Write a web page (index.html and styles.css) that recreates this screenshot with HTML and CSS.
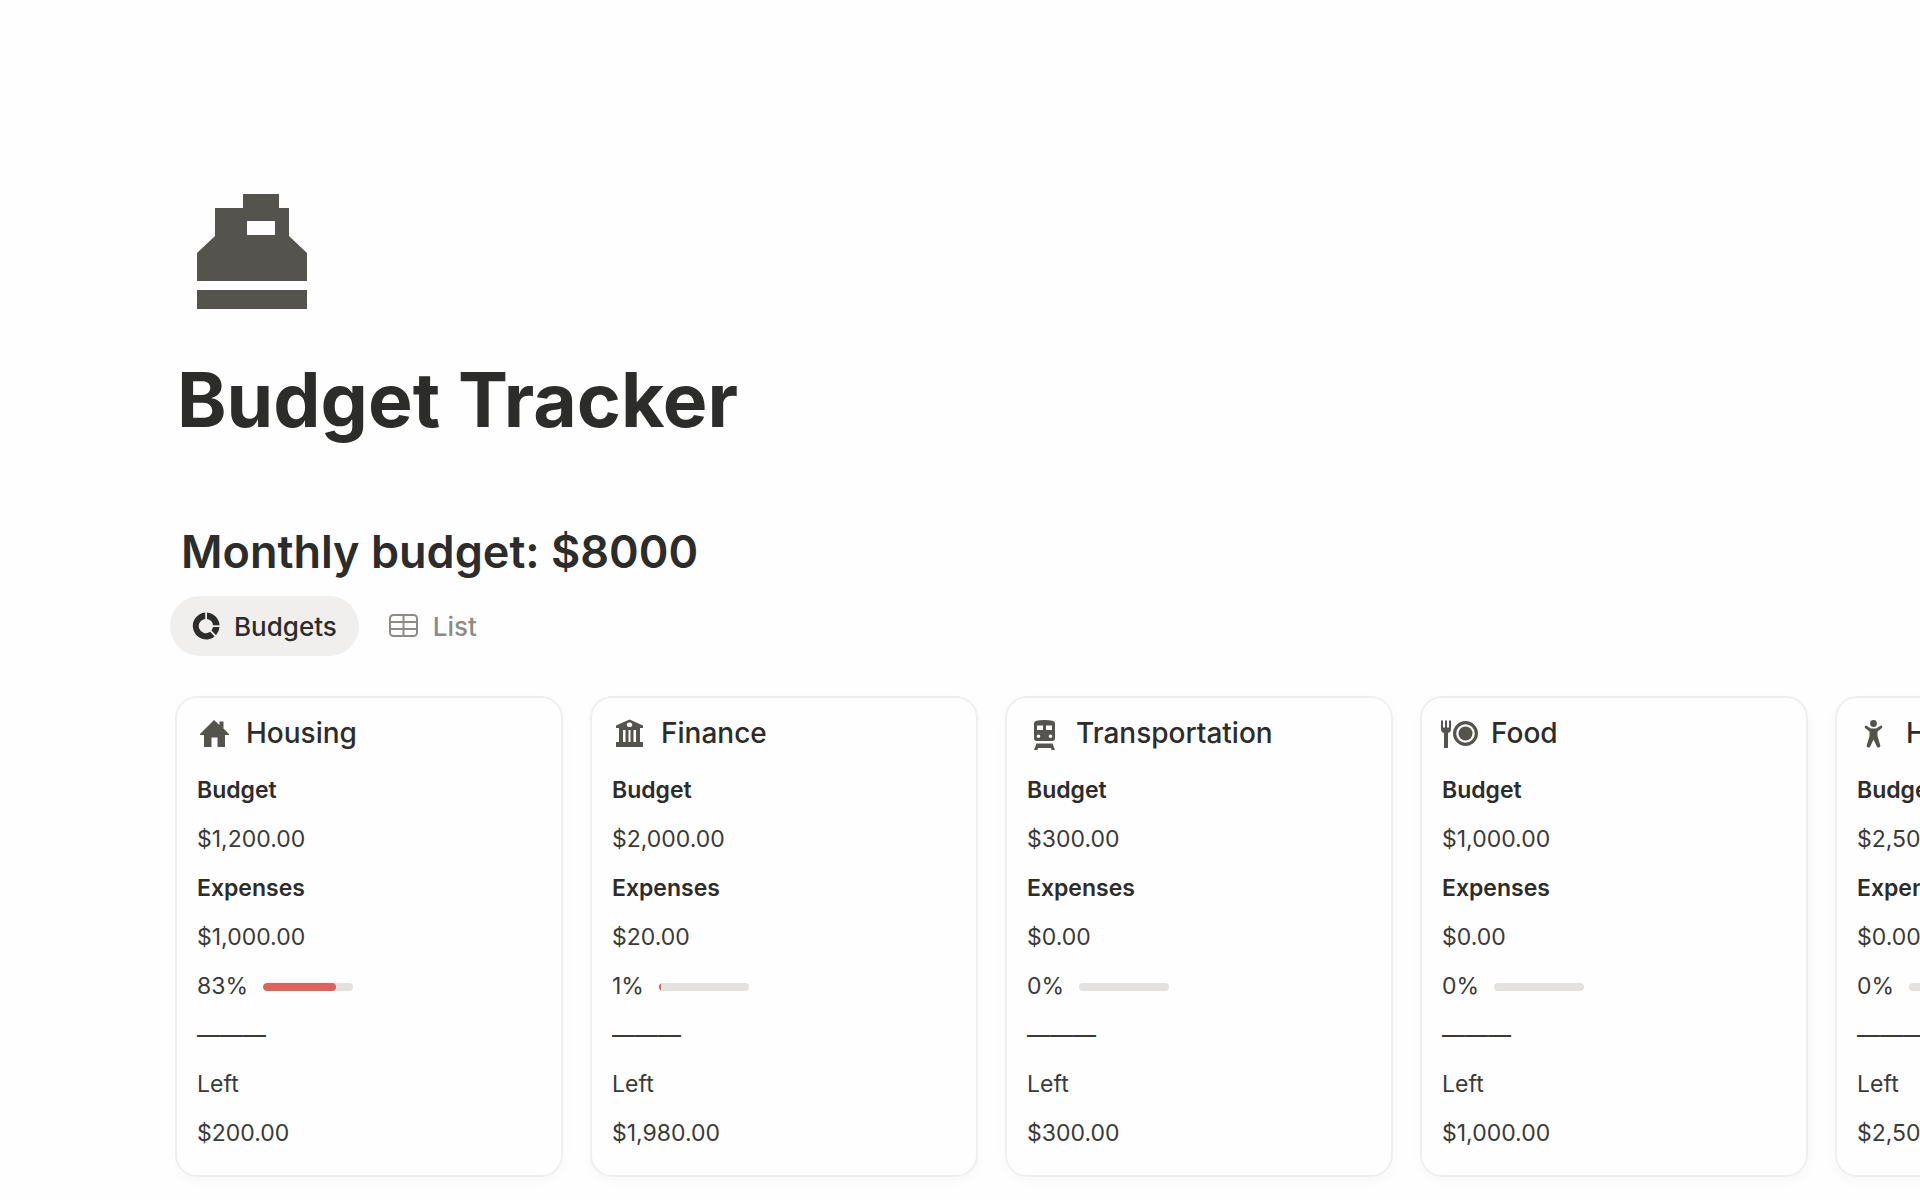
FILE: index.html
```
<!DOCTYPE html>
<html lang="en">
<head>
    <meta charset="UTF-8">
    <meta name="viewport" content="width=device-width, initial-scale=1.0">
    <title>Budget Tracker</title>
    <link rel="stylesheet" href="styles.css">
</head>
<body>

    <main class="page">
        <!-- Cash register -->
        <svg class="page-icon" viewBox="0 0 110 115" aria-hidden="true">
            <path fill-rule="evenodd" d="M46 0H82V14H92V42L110 59V87H0V59L18 42V14H46ZM50 27V41H78V27Z"/>
            <path d="M0 96H110V115H0Z"/>
        </svg>

        <h1 class="page-title">Budget Tracker</h1>
        <h2 class="section-title">Monthly budget: $8000</h2>

        <nav class="tabs">
            <button class="tab active" type="button">
                <svg class="tab-icon" viewBox="0 0 28 28" aria-hidden="true">
                    <path d="M13.2 0.5V7A7.1 7.1 0 1 0 18.2 19.700L22.600 24.600A13.5 13.5 0 1 1 13.2 0.5Z"/>
                    <path d="M15 0.5A13.5 13.5 0 0 1 27.5 13.2H21A7.1 7.1 0 0 0 15 7Z"/>
                    <path d="M21 15H27.5A13.5 13.5 0 0 1 24 23.300L19.500 18.400A7.1 7.1 0 0 0 21 15Z"/>
                </svg>
                Budgets
            </button>
            <button class="tab" type="button">
                <svg class="tab-icon table-icon" viewBox="0 0 30 28" aria-hidden="true">
                    <rect class="line" x="1" y="3" width="27" height="21" rx="3.5"/>
                    <path class="line" d="M1 10H28M1 17H28M14.5 3V24"/>
                </svg>
                List
            </button>
        </nav>

        <section class="board">
            <article class="card">
                <h3 class="card-title">
                    <svg class="card-icon" viewBox="0 0 36 36" aria-hidden="true">
                        <path d="M3 19L17 5L22.5 10V6.500H26.500V13.500L32 19V20H28V32H20.500V22.500H14.500V32H7V20H3Z"/>
                    </svg>
                    Housing
                </h3>
                <p class="label">Budget</p>
                <p>$1,200.00</p>
                <p class="label">Expenses</p>
                <p>$1,000.00</p>
                <p class="usage">83% <span class="bar"><span class="fill" style="width: 81%"></span></span></p>
                <p>———</p>
                <p>Left</p>
                <p>$200.00</p>
            </article>

            <article class="card">
                <h3 class="card-title">
                    <svg class="card-icon" viewBox="0 0 36 36" aria-hidden="true">
                        <path fill-rule="evenodd" d="M4 10.500L17.500 4.500L31 10.500V13H28V27H31V32H4V27H7V13H4ZM17.500 7.500A2.300 2.300 0 1 0 17.500 12A2.300 2.300 0 1 0 17.500 7.500ZM11 15V27H13.500V15ZM16.500 15V27H18.500V15ZM21.500 15V27H24V15Z"/>
                    </svg>
                    Finance
                </h3>
                <p class="label">Budget</p>
                <p>$2,000.00</p>
                <p class="label">Expenses</p>
                <p>$20.00</p>
                <p class="usage">1% <span class="bar"><span class="fill" style="width: 2%"></span></span></p>
                <p>———</p>
                <p>Left</p>
                <p>$1,980.00</p>
            </article>

            <article class="card">
                <h3 class="card-title">
                    <svg class="card-icon" viewBox="0 0 36 36" aria-hidden="true">
                        <path fill-rule="evenodd" d="M7 8Q7 5 17.500 5Q28 5 28 8V23Q28 26 25 26H10Q7 26 7 23ZM10 10.500V15H16V10.500ZM19 10.500V15H25V10.500ZM11.500 19.500A1.800 1.800 0 1 0 11.500 23.100A1.800 1.800 0 1 0 11.500 19.500ZM23.500 19.500A1.800 1.800 0 1 0 23.500 23.100A1.800 1.800 0 1 0 23.500 19.500Z"/>
                        <path d="M9.500 28.500H25.500L28 35H24.500L24 33H11L10.500 35H7Z"/>
                    </svg>
                    Transportation
                </h3>
                <p class="label">Budget</p>
                <p>$300.00</p>
                <p class="label">Expenses</p>
                <p>$0.00</p>
                <p class="usage">0% <span class="bar"></span></p>
                <p>———</p>
                <p>Left</p>
                <p>$300.00</p>
            </article>

            <article class="card">
                <h3 class="card-title">
                    <svg class="card-icon" viewBox="0 0 36 36" aria-hidden="true">
                        <path d="M-1 5.500H1V12.500H3V5.500H5V12.500H7V5.500H9V14Q9 17 6 18V33H2V18Q-1 17 -1 14Z"/>
                        <path fill-rule="evenodd" d="M23.500 6A12.500 12.500 0 1 0 23.500 31A12.500 12.500 0 1 0 23.500 6ZM23.500 9.200A9.300 9.300 0 1 1 23.500 27.800A9.300 9.300 0 1 1 23.500 9.200Z"/>
                        <circle cx="23.500" cy="18.500" r="7"/>
                    </svg>
                    Food
                </h3>
                <p class="label">Budget</p>
                <p>$1,000.00</p>
                <p class="label">Expenses</p>
                <p>$0.00</p>
                <p class="usage">0% <span class="bar"></span></p>
                <p>———</p>
                <p>Left</p>
                <p>$1,000.00</p>
            </article>

            <article class="card">
                <h3 class="card-title">
                    <svg class="card-icon" viewBox="0 0 36 36" aria-hidden="true">
                        <circle cx="16.500" cy="8.500" r="3.400"/>
                        <path d="M9 10.500L14 13.500H19L24 10.500Q26 11 25 13L20.500 16.500V21L23.500 31Q22 33.500 20 32L16.500 24.500L13 32Q11 33.500 9.500 31L12.500 21V16.500L8 13Q7 11 9 10.500Z"/>
                    </svg>
                    Health
                </h3>
                <p class="label">Budget</p>
                <p>$2,500.00</p>
                <p class="label">Expenses</p>
                <p>$0.00</p>
                <p class="usage">0% <span class="bar"></span></p>
                <p>———</p>
                <p>Left</p>
                <p>$2,500.00</p>
            </article>
        </section>
    </main>

</body>
</html>
```

FILE: styles.css
```
* {
    box-sizing: border-box;
}

body {
    margin: 0;
    background-color: #fefefe;
    color: #2c2c2b;
    font-family: Inter, sans-serif;
}

h1, h2, h3, p {
    margin: 0;
}

svg {
    fill: currentColor;
    flex-shrink: 0;
}

.page {
    padding: 194px 0 0 175px;
}

.page-icon {
    display: block;
    width: 110px;
    height: 115px;
    margin-left: 22px;
    color: #55534e;
}

.page-title {
    margin: 46px 0 0 2px;
    font-size: 75px;
    font-weight: 700;
    line-height: 90px;
}

.section-title {
    margin: 78px 0 15px 6px;
    font-size: 45px;
    font-weight: 600;
    line-height: 58px;
}

/* View switcher */
.tabs {
    display: flex;
    gap: 8px;
    margin-left: -5px;
}

.tab {
    display: flex;
    align-items: center;
    gap: 14px;
    height: 60px;
    padding: 0 22px;
    border: none;
    border-radius: 30px;
    background: none;
    color: #8e8b86;
    font-family: inherit;
    font-size: 26px;
    font-weight: 500;
    cursor: pointer;
}

.tab.active {
    background-color: #f0efed;
    color: #2c2c2b;
}

.tab-icon {
    width: 28px;
    height: 28px;
}

.table-icon {
    width: 30px;
}

.line {
    fill: none;
    stroke: currentColor;
    stroke-width: 2;
}

/* Cards run off the right edge and scroll sideways */
.board {
    display: grid;
    grid-auto-flow: column;
    grid-auto-columns: minmax(388px, 1fr);
    gap: 27px;
    padding: 40px 0 24px;
    overflow-x: auto;
    scrollbar-width: none;
}

.card {
    padding: 11px 20px 17px;
    border: 2px solid #f0efee;
    border-radius: 22px;
    box-shadow: 0 4px 12px rgba(0, 0, 0, 0.03);
    color: #3a3a38;
    font-size: 23px;
    line-height: 49px;
}

.card-title {
    display: flex;
    align-items: center;
    gap: 13px;
    margin-bottom: 9px;
    color: #2c2c2b;
    font-size: 28px;
    font-weight: 500;
    line-height: 48px;
}

.card-icon {
    width: 36px;
    height: 36px;
    overflow: visible;
    color: #55534e;
}

.label {
    color: #2c2c2b;
    font-weight: 600;
}

.usage {
    display: flex;
    align-items: center;
    gap: 15px;
}

.bar {
    width: 90px;
    height: 8px;
    border-radius: 4px;
    background-color: #e3e2e0;
    overflow: hidden;
}

.fill {
    display: block;
    height: 100%;
    border-radius: 4px;
    background-color: #e16259;
}
```
